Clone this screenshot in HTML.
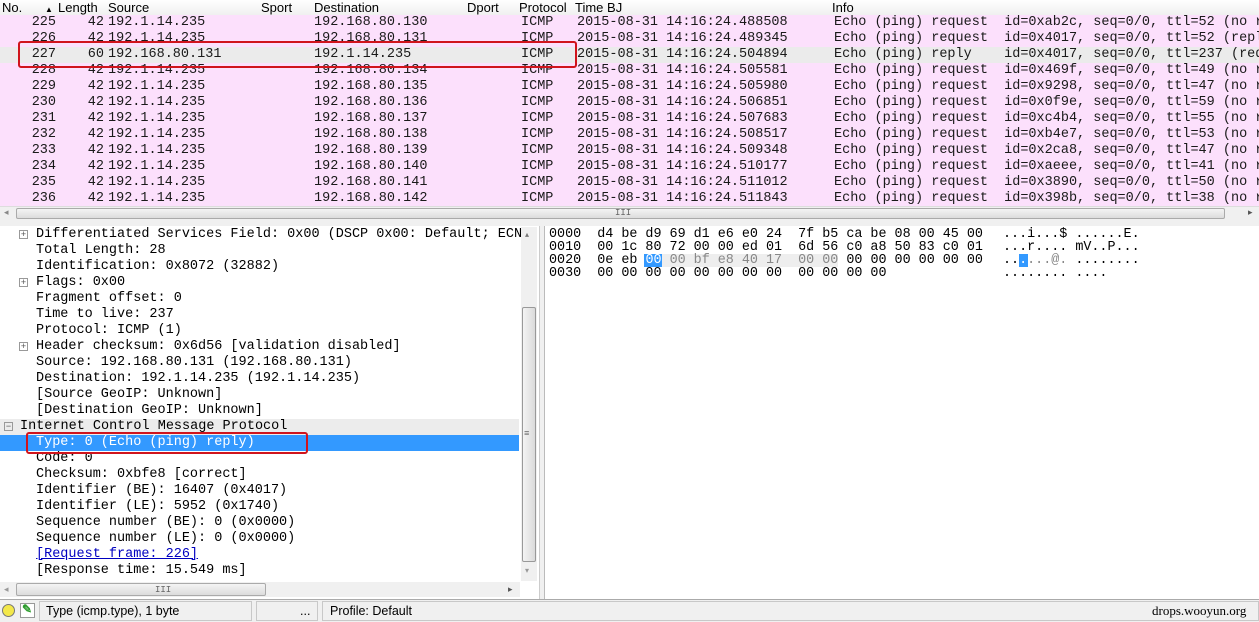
<!DOCTYPE html>
<html><head><meta charset="utf-8"><style>
*{margin:0;padding:0;box-sizing:border-box}
body{width:1259px;height:622px;overflow:hidden;background:#fff;position:relative;font-family:"Liberation Mono",monospace;font-size:13.5px;color:#000}
.a{position:absolute;white-space:pre;line-height:16px}
.hd{position:absolute;left:0;top:0;width:1259px;height:16px;background:linear-gradient(#fff,#f0f0f0);border-bottom:1px solid #d5d5d5;font-family:"Liberation Sans",sans-serif;font-size:13px}
.hd span{position:absolute;top:1px;line-height:14px}
.row{position:absolute;left:0;width:1259px;height:16px;background:#fce0fc;color:#1a1a1a}
.row span{position:absolute;top:0;line-height:16px;white-space:pre}
.r{text-align:right}
.pl{position:absolute;width:9px;height:9px;border:1px solid #999;font-size:9px;line-height:7px;text-align:center;color:#555;font-family:"Liberation Sans",sans-serif}
.hx{font-size:13.4px;line-height:13px}
</style></head><body>
<div class="hd">
<span style="left:2px">No.</span><span style="left:45px;font-size:8px;top:3px">▲</span><span style="left:58px">Length</span><span style="left:108px">Source</span><span style="left:261px">Sport</span><span style="left:314px">Destination</span><span style="left:467px">Dport</span><span style="left:519px">Protocol</span><span style="left:575px">Time BJ</span><span style="left:832px">Info</span>
</div>

<div class="row" style="top:15px"><span class="r" style="left:0;width:56px">225</span><span class="r" style="left:60px;width:44px">42</span><span style="left:108px">192.1.14.235</span><span style="left:314px">192.168.80.130</span><span style="left:521px">ICMP</span><span style="left:577px">2015-08-31 14:16:24.488508</span><span style="left:834px">Echo (ping) request  id=0xab2c, seq=0/0, ttl=52 (no r</span></div>
<div class="row" style="top:31px"><span class="r" style="left:0;width:56px">226</span><span class="r" style="left:60px;width:44px">42</span><span style="left:108px">192.1.14.235</span><span style="left:314px">192.168.80.131</span><span style="left:521px">ICMP</span><span style="left:577px">2015-08-31 14:16:24.489345</span><span style="left:834px">Echo (ping) request  id=0x4017, seq=0/0, ttl=52 (repl</span></div>
<div class="row" style="top:47px;background:#ebebeb"><span class="r" style="left:0;width:56px">227</span><span class="r" style="left:60px;width:44px">60</span><span style="left:108px">192.168.80.131</span><span style="left:314px">192.1.14.235</span><span style="left:521px">ICMP</span><span style="left:577px">2015-08-31 14:16:24.504894</span><span style="left:834px">Echo (ping) reply    id=0x4017, seq=0/0, ttl=237 (req</span></div>
<div class="row" style="top:63px"><span class="r" style="left:0;width:56px">228</span><span class="r" style="left:60px;width:44px">42</span><span style="left:108px">192.1.14.235</span><span style="left:314px">192.168.80.134</span><span style="left:521px">ICMP</span><span style="left:577px">2015-08-31 14:16:24.505581</span><span style="left:834px">Echo (ping) request  id=0x469f, seq=0/0, ttl=49 (no r</span></div>
<div class="row" style="top:79px"><span class="r" style="left:0;width:56px">229</span><span class="r" style="left:60px;width:44px">42</span><span style="left:108px">192.1.14.235</span><span style="left:314px">192.168.80.135</span><span style="left:521px">ICMP</span><span style="left:577px">2015-08-31 14:16:24.505980</span><span style="left:834px">Echo (ping) request  id=0x9298, seq=0/0, ttl=47 (no r</span></div>
<div class="row" style="top:95px"><span class="r" style="left:0;width:56px">230</span><span class="r" style="left:60px;width:44px">42</span><span style="left:108px">192.1.14.235</span><span style="left:314px">192.168.80.136</span><span style="left:521px">ICMP</span><span style="left:577px">2015-08-31 14:16:24.506851</span><span style="left:834px">Echo (ping) request  id=0x0f9e, seq=0/0, ttl=59 (no r</span></div>
<div class="row" style="top:111px"><span class="r" style="left:0;width:56px">231</span><span class="r" style="left:60px;width:44px">42</span><span style="left:108px">192.1.14.235</span><span style="left:314px">192.168.80.137</span><span style="left:521px">ICMP</span><span style="left:577px">2015-08-31 14:16:24.507683</span><span style="left:834px">Echo (ping) request  id=0xc4b4, seq=0/0, ttl=55 (no r</span></div>
<div class="row" style="top:127px"><span class="r" style="left:0;width:56px">232</span><span class="r" style="left:60px;width:44px">42</span><span style="left:108px">192.1.14.235</span><span style="left:314px">192.168.80.138</span><span style="left:521px">ICMP</span><span style="left:577px">2015-08-31 14:16:24.508517</span><span style="left:834px">Echo (ping) request  id=0xb4e7, seq=0/0, ttl=53 (no r</span></div>
<div class="row" style="top:143px"><span class="r" style="left:0;width:56px">233</span><span class="r" style="left:60px;width:44px">42</span><span style="left:108px">192.1.14.235</span><span style="left:314px">192.168.80.139</span><span style="left:521px">ICMP</span><span style="left:577px">2015-08-31 14:16:24.509348</span><span style="left:834px">Echo (ping) request  id=0x2ca8, seq=0/0, ttl=47 (no r</span></div>
<div class="row" style="top:159px"><span class="r" style="left:0;width:56px">234</span><span class="r" style="left:60px;width:44px">42</span><span style="left:108px">192.1.14.235</span><span style="left:314px">192.168.80.140</span><span style="left:521px">ICMP</span><span style="left:577px">2015-08-31 14:16:24.510177</span><span style="left:834px">Echo (ping) request  id=0xaeee, seq=0/0, ttl=41 (no r</span></div>
<div class="row" style="top:175px"><span class="r" style="left:0;width:56px">235</span><span class="r" style="left:60px;width:44px">42</span><span style="left:108px">192.1.14.235</span><span style="left:314px">192.168.80.141</span><span style="left:521px">ICMP</span><span style="left:577px">2015-08-31 14:16:24.511012</span><span style="left:834px">Echo (ping) request  id=0x3890, seq=0/0, ttl=50 (no r</span></div>
<div class="row" style="top:191px"><span class="r" style="left:0;width:56px">236</span><span class="r" style="left:60px;width:44px">42</span><span style="left:108px">192.1.14.235</span><span style="left:314px">192.168.80.142</span><span style="left:521px">ICMP</span><span style="left:577px">2015-08-31 14:16:24.511843</span><span style="left:834px">Echo (ping) request  id=0x398b, seq=0/0, ttl=38 (no r</span></div>
<div style="position:absolute;left:18px;top:41px;width:559px;height:27px;border:2px solid #d0141c;border-radius:3px"></div>

<div style="position:absolute;left:0;top:206px;width:1259px;height:15px;background:#f0f0f0;border-top:1px solid #ddd"></div>
<div style="position:absolute;left:16px;top:208px;width:1209px;height:11px;background:linear-gradient(#f4f4f4,#dcdcdc);border:1px solid #aaa;border-radius:2px"></div>
<div class="a" style="left:615px;top:205px;font-size:9px;color:#666">III</div>
<div class="a" style="left:4px;top:205px;font-size:9px;color:#888">◂</div>
<div class="a" style="left:1248px;top:205px;font-size:9px;color:#555">▸</div>
<div style="position:absolute;left:0;top:221px;width:1259px;height:5px;background:#f0f0f0"></div>

<div style="position:absolute;left:0;top:226px;width:540px;height:374px;border-right:1px solid #ccc"></div>
<div style="position:absolute;left:0;top:419px;width:519px;height:16px;background:#ececec"></div>
<div style="position:absolute;left:0;top:435px;width:519px;height:16px;background:#3399ff"></div>
<div class="pl" style="left:19px;top:230px">+</div>
<div class="pl" style="left:19px;top:278px">+</div>
<div class="pl" style="left:19px;top:342px">+</div>
<div class="pl" style="left:4px;top:422px">−</div>
<div class="a" style="left:36px;top:227px">Differentiated Services Field: 0x00 (DSCP 0x00: Default; ECN
Total Length: 28
Identification: 0x8072 (32882)
Flags: 0x00
Fragment offset: 0
Time to live: 237
Protocol: ICMP (1)
Header checksum: 0x6d56 [validation disabled]
Source: 192.168.80.131 (192.168.80.131)
Destination: 192.1.14.235 (192.1.14.235)
[Source GeoIP: Unknown]
[Destination GeoIP: Unknown]</div>
<div class="a" style="left:20px;top:419px">Internet Control Message Protocol</div>
<div class="a" style="left:36px;top:435px;color:#fff">Type: 0 (Echo (ping) reply)</div>
<div class="a" style="left:36px;top:451px">Code: 0
Checksum: 0xbfe8 [correct]
Identifier (BE): 16407 (0x4017)
Identifier (LE): 5952 (0x1740)
Sequence number (BE): 0 (0x0000)
Sequence number (LE): 0 (0x0000)
<span style="color:#0000c0;text-decoration:underline">[Request frame: 226]</span>
[Response time: 15.549 ms]</div>
<div style="position:absolute;left:26px;top:432px;width:282px;height:22px;border:2px solid #d0141c;border-radius:3px"></div>

<div style="position:absolute;left:521px;top:227px;width:16px;height:354px;background:#f0f0f0"></div>
<div style="position:absolute;left:522px;top:307px;width:14px;height:255px;background:linear-gradient(90deg,#f4f4f4,#dadada);border:1px solid #999;border-radius:2px"></div>
<div class="a" style="left:524px;top:426px;font-size:9px;color:#666">≡</div>
<div class="a" style="left:525px;top:228px;font-size:8px;color:#777">▴</div>
<div class="a" style="left:525px;top:564px;font-size:8px;color:#999">▾</div>
<div style="position:absolute;left:0;top:582px;width:520px;height:15px;background:#f0f0f0"></div>
<div style="position:absolute;left:16px;top:583px;width:250px;height:13px;background:linear-gradient(#f4f4f4,#dcdcdc);border:1px solid #aaa;border-radius:2px"></div>
<div class="a" style="left:155px;top:582px;font-size:9px;color:#666">III</div>
<div class="a" style="left:508px;top:582px;font-size:9px;color:#555">▸</div>
<div class="a" style="left:4px;top:582px;font-size:9px;color:#999">◂</div>
<div style="position:absolute;left:540px;top:226px;width:5px;height:374px;background:#f0f0f0"></div>

<div style="position:absolute;left:544px;top:226px;width:715px;height:374px;border-left:1px solid #bbb"></div>
<div style="position:absolute;left:662px;top:254px;width:176px;height:13px;background:#eeeeee"></div>
<div style="position:absolute;left:644px;top:254px;width:18px;height:13px;background:#3399ff"></div>
<div style="position:absolute;left:1019px;top:254px;width:9px;height:13px;background:#3399ff"></div>
<div class="a hx" style="left:549px;top:228px">0000  d4 be d9 69 d1 e6 e0 24  7f b5 ca be 08 00 45 00
0010  00 1c 80 72 00 00 ed 01  6d 56 c0 a8 50 83 c0 01
0020  0e eb <span style="color:#fff">00</span> <span style="color:#888">00 bf e8 40 17  00 00</span> 00 00 00 00 00 00
0030  00 00 00 00 00 00 00 00  00 00 00 00</div>
<div class="a hx" style="left:1003px;top:228px">...i...$ ......E.
...r.... mV..P...
..<span style="color:#fff">.</span><span style="color:#888">...@. </span>........
........ ....</div>

<div style="position:absolute;left:0;top:599px;width:1259px;height:23px;background:#f0f0f0;border-top:1px solid #aaa"></div>
<div style="position:absolute;left:2px;top:604px;width:13px;height:13px;border-radius:50%;background:#f3e84a;border:1px solid #777"></div>
<div style="position:absolute;left:20px;top:603px;width:15px;height:15px;border:1px solid #999;background:#fff"></div>
<div class="a" style="left:22px;top:601px;color:#2a9a2a;font-family:'Liberation Sans';font-size:12px;font-weight:bold">✎</div>
<div style="position:absolute;left:39px;top:601px;width:213px;height:20px;border:1px solid #c8c8c8"></div>
<div class="a" style="left:46px;top:603px;font-family:'Liberation Sans',sans-serif;font-size:12.5px">Type (icmp.type), 1 byte</div>
<div style="position:absolute;left:256px;top:601px;width:62px;height:20px;border:1px solid #c8c8c8"></div>
<div class="a" style="left:300px;top:603px;font-family:'Liberation Sans',sans-serif;font-size:12.5px">...</div>
<div style="position:absolute;left:322px;top:601px;width:937px;height:20px;border:1px solid #c8c8c8"></div>
<div class="a" style="left:330px;top:603px;font-family:'Liberation Sans',sans-serif;font-size:12.5px">Profile: Default</div>
<div class="a" style="left:1152px;top:603px;font-family:'Liberation Serif',serif;font-size:13px">drops.wooyun.org</div>
</body></html>
